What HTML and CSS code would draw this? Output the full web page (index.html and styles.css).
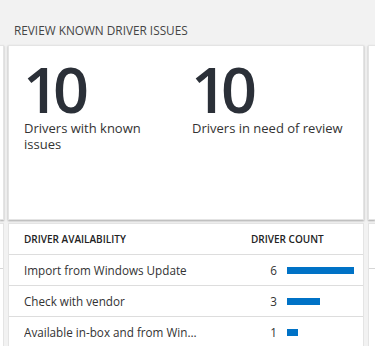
FILE: index.html
```html
<!DOCTYPE html>
<html lang="en">
<head>
  <meta charset="UTF-8" />
  <meta name="viewport" content="width=device-width, initial-scale=1" />
  <title>Review known driver issues</title>
  <link rel="stylesheet" href="styles.css">
</head>
<body>
  <h2 class="section-title">REVIEW KNOWN DRIVER ISSUES</h2>

  <div class="tile-row tile-row-top">
    <div class="tile stub stub-left"></div>
    <div class="tile summary">
      <div class="stat">
        <div class="stat-value">10</div>
        <div class="stat-label">Drivers with known issues</div>
      </div>
      <div class="stat">
        <div class="stat-value">10</div>
        <div class="stat-label">Drivers in need of review</div>
      </div>
    </div>
    <div class="tile stub stub-right"></div>
  </div>

  <div class="tile-row tile-row-bottom">
    <div class="tile stub stub-left"><div class="stub-head"></div></div>
    <div class="tile table-tile">
      <div class="table-row table-head">
        <div class="col-name">DRIVER AVAILABILITY</div>
        <div class="col-count">DRIVER COUNT</div>
      </div>
      <div class="table-row">
        <div class="col-name">Import from Windows Update</div>
        <div class="col-count"><span class="count">6</span><span class="bar" style="width: 67px"></span></div>
      </div>
      <div class="table-row">
        <div class="col-name">Check with vendor</div>
        <div class="col-count"><span class="count">3</span><span class="bar" style="width: 33px"></span></div>
      </div>
      <div class="table-row">
        <div class="col-name">Available in-box and from Windows Update</div>
        <div class="col-count"><span class="count">1</span><span class="bar" style="width: 11px"></span></div>
      </div>
    </div>
    <div class="tile stub stub-right"><div class="stub-head"></div></div>
  </div>
</body>
</html>
```

FILE: styles.css
```css
body {
  margin: 0;
  font-family: 'Open Sans', 'Noto Sans', sans-serif;
  background: #f2f2f2;
  color: #333;
  overflow: hidden;
}

.section-title {
  margin: 0;
  padding: 22px 14px 7px;
  font-size: 11.8px;
  font-weight: normal;
  line-height: 16px;
  color: #444;
}

.tile-row {
  display: flex;
  gap: 4px;
}

.tile {
  background: #fff;
  border: 1px solid #e4e4e4;
  box-sizing: border-box;
}

.stub-left {
  width: 4px;
  border-left: none;
}

.stub-right {
  flex: 1;
  border-right: none;
}

.tile-row-top .tile {
  height: 175px;
  box-shadow: 0 1px 2px rgba(0, 0, 0, 0.3);
}

.tile-row-bottom {
  margin-top: 3px;
}

.tile-row-bottom .tile {
  height: 130px;
}

.stub-head {
  height: 44px;
  border-bottom: 1px solid #d6d6d6;
}

/* Сводка */
.summary {
  width: 356px;
  padding: 11px 15px 0;
  display: grid;
  grid-template-columns: 168px 1fr;
  align-content: start;
}

.stat-value {
  font-size: 63px;
  font-weight: 600;
  line-height: 1;
  color: #2b3038;
  letter-spacing: -6px;
  margin-left: -1px;
}

.stat-label {
  font-size: 13px;
  line-height: 16px;
  width: 130px;
  color: #333;
}

.stat + .stat .stat-label {
  width: auto;
}

/* Таблица */
.table-tile {
  width: 356px;
}

.table-row {
  display: grid;
  grid-template-columns: 1fr 97px;
  align-items: center;
  height: 30px;
  padding: 0 15px;
  border-bottom: 1px solid #ddd;
  font-size: 11.7px;
  color: #333;
}

.table-head {
  font-size: 10px;
  font-weight: 600;
  color: #222;
}

.col-name {
  white-space: nowrap;
  overflow: hidden;
  text-overflow: ellipsis;
  max-width: 178px;
}

.col-count {
  display: flex;
  align-items: center;
}

.count {
  flex-shrink: 0;
  width: 26px;
  text-align: right;
}

.bar {
  flex-shrink: 0;
  height: 7px;
  margin-left: 10px;
  background: #0072c6;
}
```
